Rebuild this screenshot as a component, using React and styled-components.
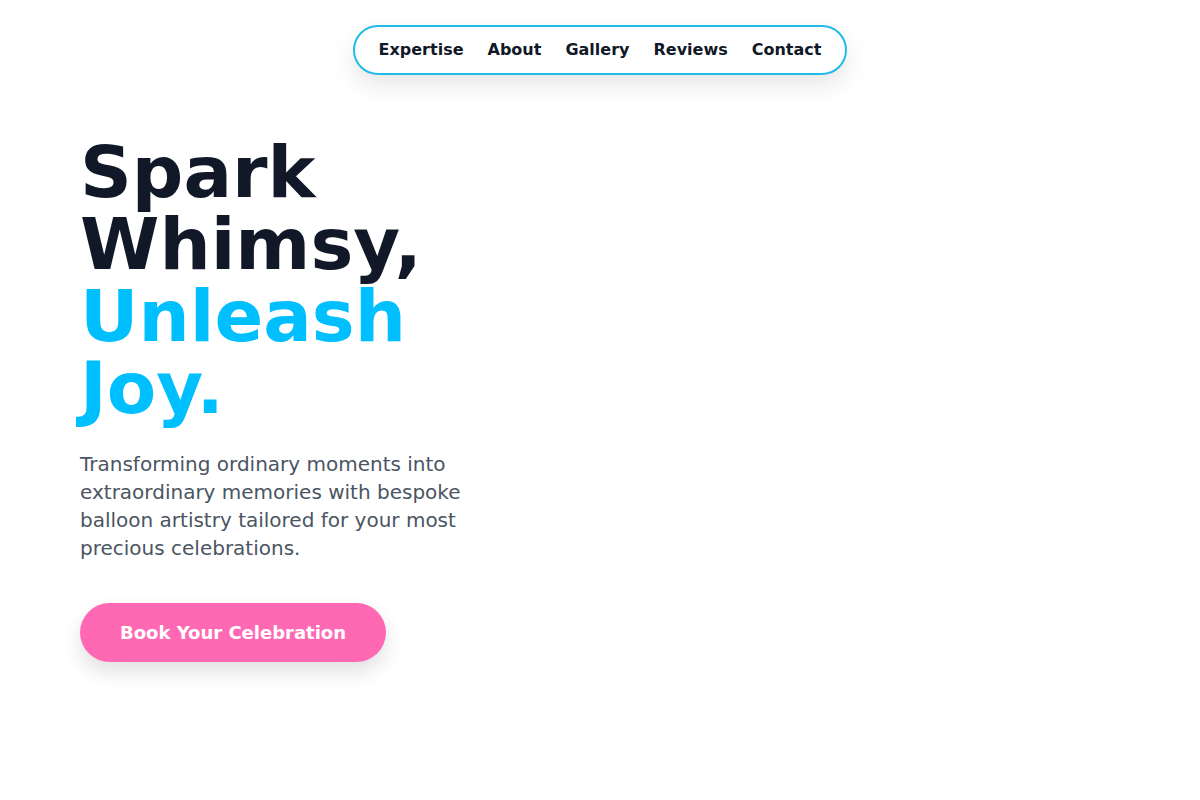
import React from "react";
import styled, { createGlobalStyle } from "styled-components";

const Global = createGlobalStyle`
  html, body {
    margin: 0;
    padding: 0;
    background: #ffffff;
    font-family: "DejaVu Sans", "Liberation Sans", sans-serif;
  }
  * { box-sizing: border-box; }
`;

const Pagina = styled.div`
  width: 1200px;
  min-height: 800px;
  background: #fff;
`;

const Cabecera = styled.header`
  display: flex;
  justify-content: center;
  padding-top: 25px;
`;

const Menu = styled.nav`
  display: flex;
  align-items: center;
  gap: 24px;
  height: 50px;
  padding: 0 24px 1px;
  border: 2px solid #1fbce9;
  border-radius: 999px;
  background: #fff;
  box-shadow: 0 10px 25px rgba(0, 0, 0, 0.1);
`;

const Enlace = styled.a`
  color: #111827;
  font-weight: 700;
  font-size: 16px;
  text-decoration: none;
  cursor: pointer;
  :hover {
    color: #00bfff;
  }
`;

const Hero = styled.section`
  padding: 61px 80px 0;
`;

const Columna = styled.div`
  max-width: 440px;
`;

const Titulo = styled.h1`
  margin: 0;
  font-size: 72px;
  line-height: 72px;
  font-weight: 700;
  color: #111827;
`;

const Resalte = styled.span`
  color: #00bfff;
`;

const Descripcion = styled.p`
  margin: 26px 0 0;
  max-width: 430px;
  font-size: 20px;
  line-height: 28px;
  color: #4b5563;
`;

const Boton = styled.button`
  margin-top: 41px;
  padding: 18px 40px;
  border: 0;
  border-radius: 999px;
  background: #ff69b4;
  color: #fff;
  font-family: inherit;
  font-weight: 700;
  font-size: 18px;
  line-height: 23px;
  cursor: pointer;
  box-shadow: 0 10px 20px rgba(0, 0, 0, 0.12);
`;

const enlaces = ["Expertise", "About", "Gallery", "Reviews", "Contact"];

const App = () => (
  <Pagina>
    <Global />
    <Cabecera>
      <Menu>
        {enlaces.map((e) => (
          <Enlace key={e}>{e}</Enlace>
        ))}
      </Menu>
    </Cabecera>
    <Hero>
      <Columna>
        <Titulo>
          Spark Whimsy, <Resalte>Unleash Joy.</Resalte>
        </Titulo>
        <Descripcion>
          Transforming ordinary moments into extraordinary memories with bespoke
          balloon artistry tailored for your most precious celebrations.
        </Descripcion>
        <Boton>Book Your Celebration</Boton>
      </Columna>
    </Hero>
  </Pagina>
);

export default App;
